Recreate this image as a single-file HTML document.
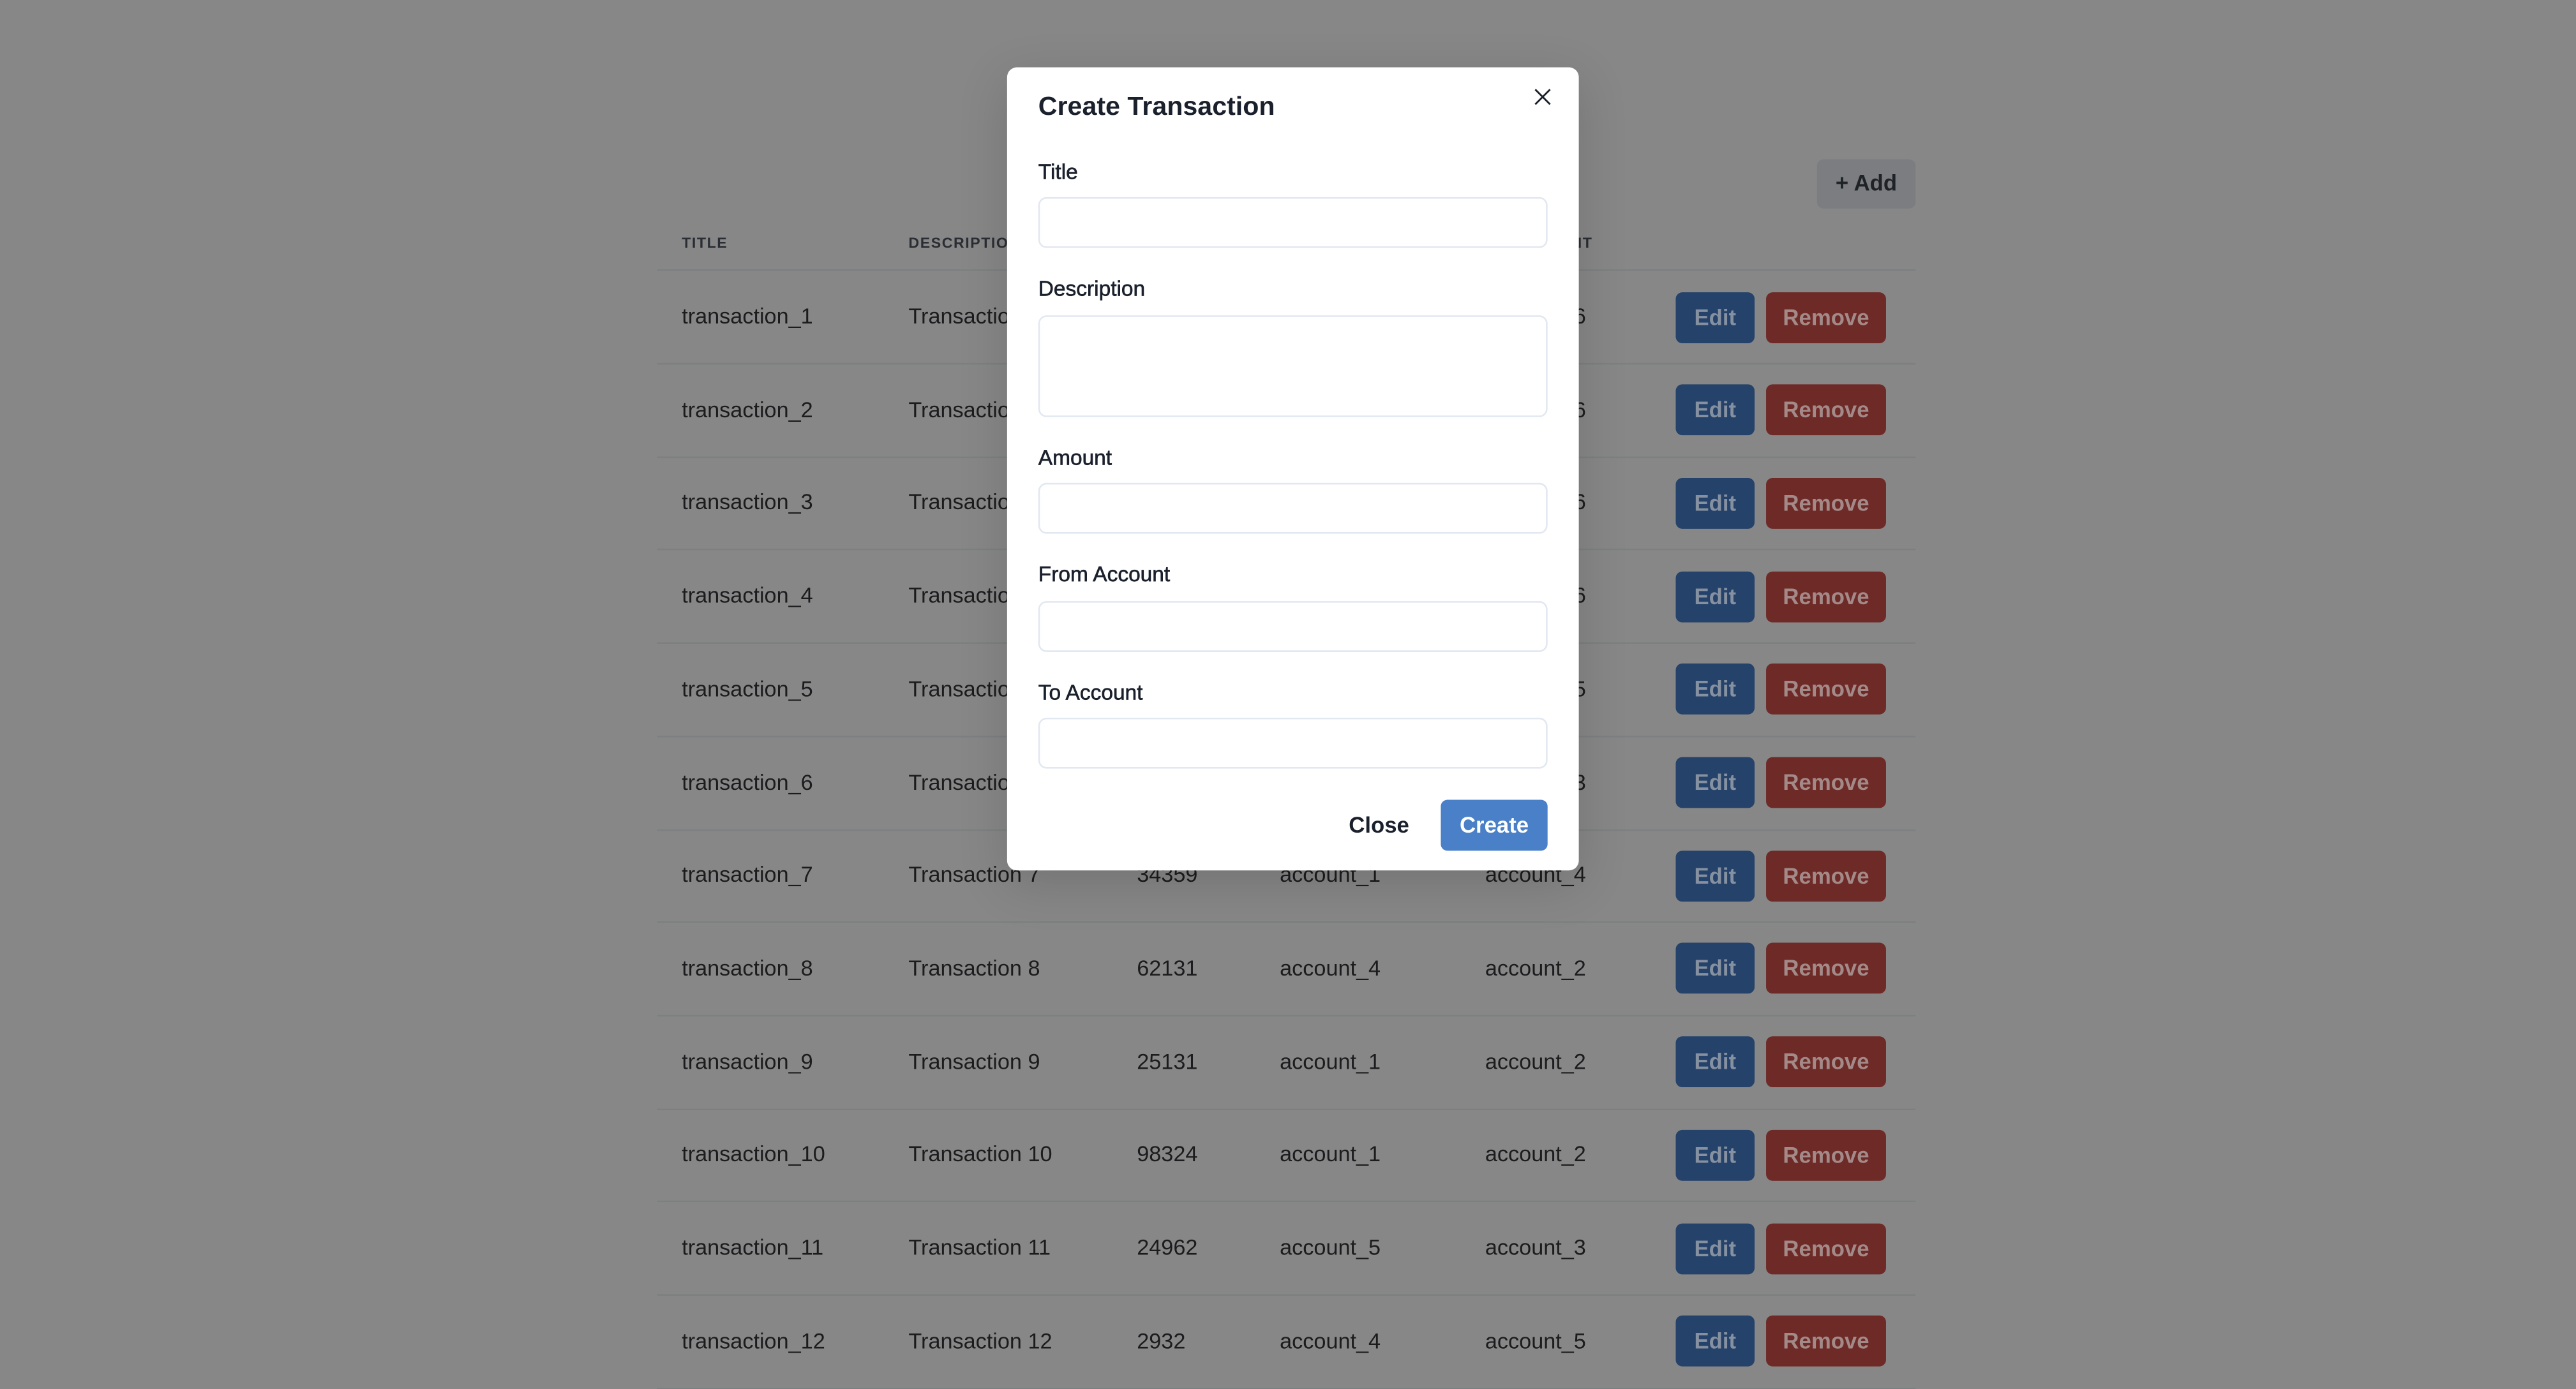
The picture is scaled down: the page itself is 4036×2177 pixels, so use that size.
<!DOCTYPE html>
<html><head><meta charset="utf-8"><style>
html,body{margin:0;padding:0;width:4036px;height:2150px;overflow:hidden;background:#878787;}
#s{position:absolute;left:0;top:0;width:1568px;height:835px;transform:scale(2.574);transform-origin:0 0;font-family:"Liberation Sans",sans-serif;color:#1c1c1e;}
.a{position:absolute;}
.hd{font-size:9px;font-weight:bold;letter-spacing:.6px;color:#2a2d33;top:143px;}
.line{position:absolute;left:400px;width:766px;height:1px;background:#7d8080;}
.cell{position:absolute;font-size:13.3px;line-height:16px;color:#1c1c1e;}
.ed{position:absolute;left:1020px;width:48px;height:31px;background:#25426a;border-radius:4px;color:#8590a0;font-size:13.5px;font-weight:bold;text-align:center;line-height:31px;}
.rm{position:absolute;left:1075px;width:73px;height:31px;background:#6e2a27;border-radius:4px;color:#a38a88;font-size:13.5px;font-weight:bold;text-align:center;line-height:31px;}
.modal{position:absolute;left:613px;top:41px;width:348px;height:489px;background:#fff;border-radius:6px;box-shadow:0 8px 30px rgba(0,0,0,.15);}
.lb{position:absolute;left:19px;font-size:13px;color:#1a202c;-webkit-text-stroke:0.25px #1a202c;}
.in{position:absolute;left:19px;width:308px;height:29px;border:1px solid #e2e8f0;border-radius:5px;box-sizing:content-box;}
</style></head><body><div id="s">
<div class="a" style="left:1106px;top:97px;width:60px;height:30px;background:#7b7d80;border-radius:4px;font-size:13.5px;font-weight:bold;line-height:30px;text-align:center;color:#1f2226">+ Add</div>
<div class="a hd" style="left:415px">TITLE</div>
<div class="a hd" style="left:553px">DESCRIPTION</div>
<div class="a hd" style="left:692px">AMOUNT</div>
<div class="a hd" style="left:779px">FROM ACCOUNT</div>
<div class="a hd" style="left:904px">TO ACCOUNT</div>
<div class="line" style="top:164px"></div>
<div id="rows"></div>
<script>
var d=[[1,"45231","account_2","account_6"],[2,"12931","account_3","account_6"],[3,"53121","account_1","account_6"],[4,"73122","account_5","account_6"],[5,"23131","account_2","account_5"],[6,"65131","account_4","account_3"],[7,"34359","account_1","account_4"],[8,"62131","account_4","account_2"],[9,"25131","account_1","account_2"],[10,"98324","account_1","account_2"],[11,"24962","account_5","account_3"],[12,"2932","account_4","account_5"]];
var h="";
for(var i=0;i<d.length;i++){var c=193+i*56.7;var t=c-8;
h+='<div class="cell" style="left:415px;top:'+t+'px">transaction_'+d[i][0]+'</div>';
h+='<div class="cell" style="left:553px;top:'+t+'px">Transaction '+d[i][0]+'</div>';
h+='<div class="cell" style="left:692px;top:'+t+'px">'+d[i][1]+'</div>';
h+='<div class="cell" style="left:779px;top:'+t+'px">'+d[i][2]+'</div>';
h+='<div class="cell" style="left:904px;top:'+t+'px">'+d[i][3]+'</div>';
h+='<div class="ed" style="top:'+(c-15.5)+'px">Edit</div><div class="rm" style="top:'+(c-15.5)+'px">Remove</div>';
h+='<div class="line" style="top:'+(c+28)+'px"></div>';}
document.getElementById("rows").innerHTML=h;
</script>
<div class="modal">
<div class="a" style="left:19px;top:16px;font-size:16px;font-weight:bold;color:#1a202c">Create Transaction</div>
<svg class="a" style="left:321px;top:13px" width="10" height="10" viewBox="0 0 10 10"><path d="M0.5 0.5L9.5 9.5M9.5 0.5L0.5 9.5" stroke="#1a202c" stroke-width="1.1"/></svg>
<div class="lb" style="top:56px">Title</div>
<div class="in" style="top:79px"></div>
<div class="lb" style="top:127px">Description</div>
<div class="in" style="top:151px;height:60px"></div>
<div class="lb" style="top:230px">Amount</div>
<div class="in" style="top:253px"></div>
<div class="lb" style="top:301px">From Account</div>
<div class="in" style="top:325px"></div>
<div class="lb" style="top:373px">To Account</div>
<div class="in" style="top:396px"></div>
<div class="a" style="left:208px;top:454px;font-size:13.5px;font-weight:bold;color:#1a202c">Close</div>
<div class="a" style="left:264px;top:446px;width:65px;height:31px;background:#4a80c8;border-radius:4px;color:#fff;font-size:13.5px;font-weight:bold;text-align:center;line-height:31px">Create</div>
</div>
</div></body></html>
